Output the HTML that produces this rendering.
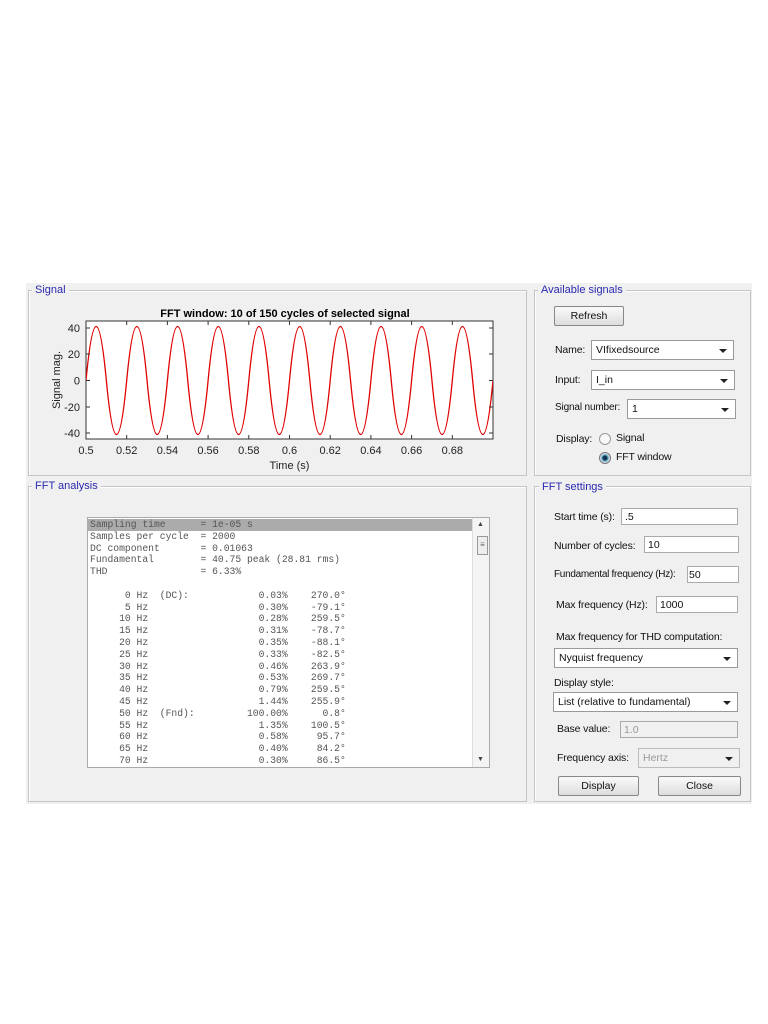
<!DOCTYPE html>
<html><head><meta charset="utf-8"><style>
body{margin:0;width:768px;height:1024px;background:#fff;position:relative;font-family:"Liberation Sans",sans-serif;font-size:11px;color:#111;overflow:hidden}
.a{position:absolute}
.bg{left:26px;top:283px;width:726px;height:521px;background:#f0f0f0}
.pn{position:absolute;border:1px solid #c4c4c4;box-shadow:1px 1px 0 #fff inset}
.lg{position:absolute;background:#f0f0f0;color:#2a2ab0;padding:0 3px;font-size:11px;line-height:12px}
.tb{position:absolute;background:#fff;border:1px solid #aaa;height:17px;line-height:17px;padding-left:3px;box-sizing:border-box;font-size:10.5px}
.dd{position:absolute;background:#fff;border:1px solid #999;height:20px;line-height:19px;padding-left:4px;box-sizing:border-box;font-size:10.5px}
.dd:after{content:"";position:absolute;right:6px;top:8px;border-left:4px solid transparent;border-right:4px solid transparent;border-top:4px solid #222}
.bt{position:absolute;border:1px solid #888;border-radius:2px;background:linear-gradient(#fafafa,#ddd);text-align:center;height:20px;line-height:19px;box-sizing:border-box;font-size:10.5px}
.lb{position:absolute;font-size:10.5px;letter-spacing:-0.15px}
pre{margin:0;font-family:"Liberation Mono",monospace;font-size:9.7px;line-height:11.8px;color:#555}
</style></head><body>
<div class="a bg"></div>
<div class="pn" style="left:28px;top:290px;width:497px;height:184px"></div>
<div class="lg" style="left:32px;top:284px">Signal</div>
<div class="pn" style="left:28px;top:486px;width:497px;height:314px"></div>
<div class="lg" style="left:32px;top:480px">FFT analysis</div>
<div class="pn" style="left:534px;top:290px;width:215px;height:184px"></div>
<div class="lg" style="left:538px;top:284px">Available signals</div>
<div class="pn" style="left:534px;top:486px;width:215px;height:314px"></div>
<div class="lg" style="left:539px;top:481px">FFT settings</div>

<svg class="a" style="left:40px;top:300px" width="480" height="175" viewBox="40 300 480 175">
<rect x="86" y="321" width="407" height="118" fill="#fff" stroke="#333" stroke-width="1"/>
<clipPath id="c"><rect x="86" y="321" width="407" height="118"/></clipPath>
<path clip-path="url(#c)" fill="none" stroke="#e00000" stroke-width="1.3" d="M86 380.5 Q96.2 272.5 106.35 380.5 T126.7 380.5 T147.05 380.5 T167.4 380.5 T187.75 380.5 T208.1 380.5 T228.45 380.5 T248.8 380.5 T269.15 380.5 T289.5 380.5 T309.85 380.5 T330.2 380.5 T350.55 380.5 T370.9 380.5 T391.25 380.5 T411.6 380.5 T431.95 380.5 T452.3 380.5 T472.65 380.5 T493 380.5"/>
<g stroke="#333" stroke-width="1">
<path d="M86 328h4M86 354h4M86 380.5h4M86 407h4M86 433h4M493 328h-4M493 354h-4M493 380.5h-4M493 407h-4M493 433h-4"/>
<path d="M126.7 439v-4M167.4 439v-4M208.1 439v-4M248.8 439v-4M289.5 439v-4M330.2 439v-4M370.9 439v-4M411.6 439v-4M452.3 439v-4M126.7 321v4M167.4 321v4M208.1 321v4M248.8 321v4M289.5 321v4M330.2 321v4M370.9 321v4M411.6 321v4M452.3 321v4"/>
</g>
<g font-family="Liberation Sans" font-size="11" fill="#222">
<text x="285" y="317" text-anchor="middle" font-weight="bold" fill="#000">FFT window: 10 of 150 cycles of selected signal</text>
<g text-anchor="end"><text x="80" y="332">40</text><text x="80" y="358">20</text><text x="80" y="384.5">0</text><text x="80" y="411">-20</text><text x="80" y="437">-40</text></g>
<g text-anchor="middle"><text x="86" y="454">0.5</text><text x="126.7" y="454">0.52</text><text x="167.4" y="454">0.54</text><text x="208.1" y="454">0.56</text><text x="248.8" y="454">0.58</text><text x="289.5" y="454">0.6</text><text x="330.2" y="454">0.62</text><text x="370.9" y="454">0.64</text><text x="411.6" y="454">0.66</text><text x="452.3" y="454">0.68</text>
<text x="289.5" y="469">Time (s)</text>
<text transform="translate(60 380) rotate(-90)">Signal mag.</text></g>
</g>
</svg>

<div class="a" style="left:87px;top:517px;width:403px;height:251px;background:#fff;border:1px solid #aaa;box-sizing:border-box;overflow:hidden">
<div class="a" style="left:0;top:1px;width:384px;height:12px;background:#ababab"></div>
<div class="a" style="left:384px;top:0;width:17px;height:249px;background:#f4f4f4;border-left:1px solid #ddd"></div>
<div class="a" style="left:389px;top:18px;width:9px;height:17px;border:1px solid #999;background:#eee;font-size:8px;line-height:15px;text-align:center;color:#666">≡</div>
<div class="a" style="left:389px;top:3px;font-size:7px;color:#444">▲</div>
<div class="a" style="left:389px;top:238px;font-size:7px;color:#444">▼</div>
<pre class="a" style="left:2px;top:1px">Sampling time      = 1e-05 s
Samples per cycle  = 2000
DC component       = 0.01063
Fundamental        = 40.75 peak (28.81 rms)
THD                = 6.33%

      0 Hz  (DC):            0.03%    270.0°
      5 Hz                   0.30%    -79.1°
     10 Hz                   0.28%    259.5°
     15 Hz                   0.31%    -78.7°
     20 Hz                   0.35%    -88.1°
     25 Hz                   0.33%    -82.5°
     30 Hz                   0.46%    263.9°
     35 Hz                   0.53%    269.7°
     40 Hz                   0.79%    259.5°
     45 Hz                   1.44%    255.9°
     50 Hz  (Fnd):         100.00%      0.8°
     55 Hz                   1.35%    100.5°
     60 Hz                   0.58%     95.7°
     65 Hz                   0.40%     84.2°
     70 Hz                   0.30%     86.5°</pre>
</div>

<div class="bt" style="left:554px;top:306px;width:70px">Refresh</div>
<div class="lb" style="left:555px;top:344px">Name:</div>
<div class="dd" style="left:591px;top:340px;width:143px">VIfixedsource</div>
<div class="lb" style="left:555px;top:374px">Input:</div>
<div class="dd" style="left:591px;top:370px;width:144px">I_in</div>
<div class="lb" style="left:555px;top:402px;font-size:10px">Signal number:</div>
<div class="dd" style="left:627px;top:399px;width:109px">1</div>
<div class="lb" style="left:556px;top:433px">Display:</div>
<div class="a" style="left:599px;top:433px;width:10px;height:10px;border:1px solid #999;border-radius:50%;background:#f8f8f8"></div>
<div class="lb" style="left:616px;top:432px">Signal</div>
<div class="a" style="left:599px;top:452px;width:10px;height:10px;border:1px solid #777;border-radius:50%;background:radial-gradient(circle,#135 0 2px,#6ab 3px,#eef 5px)"></div>
<div class="lb" style="left:616px;top:451px">FFT window</div>

<div class="lb" style="left:554px;top:511px">Start time (s):</div>
<div class="tb" style="left:621px;top:508px;width:117px">.5</div>
<div class="lb" style="left:554px;top:540px">Number of cycles:</div>
<div class="tb" style="left:644px;top:536px;width:95px">10</div>
<div class="lb" style="left:554px;top:569px;font-size:10px;letter-spacing:-0.3px">Fundamental frequency (Hz):</div>
<div class="tb" style="left:687px;top:566px;width:52px;padding-left:1px">50</div>
<div class="lb" style="left:556px;top:599px">Max frequency (Hz):</div>
<div class="tb" style="left:656px;top:596px;width:82px">1000</div>
<div class="lb" style="left:556px;top:631px">Max frequency for THD computation:</div>
<div class="dd" style="left:554px;top:648px;width:184px">Nyquist frequency</div>
<div class="lb" style="left:554px;top:677px">Display style:</div>
<div class="dd" style="left:553px;top:692px;width:185px">List (relative to fundamental)</div>
<div class="lb" style="left:557px;top:723px">Base value:</div>
<div class="tb" style="left:620px;top:721px;width:118px;background:#f0f0f0;color:#999">1.0</div>
<div class="lb" style="left:557px;top:752px">Frequency axis:</div>
<div class="dd" style="left:638px;top:748px;width:102px;background:#f0f0f0;color:#999;border-color:#bbb">Hertz</div>
<div class="bt" style="left:558px;top:776px;width:81px">Display</div>
<div class="bt" style="left:658px;top:776px;width:83px">Close</div>
</body></html>
